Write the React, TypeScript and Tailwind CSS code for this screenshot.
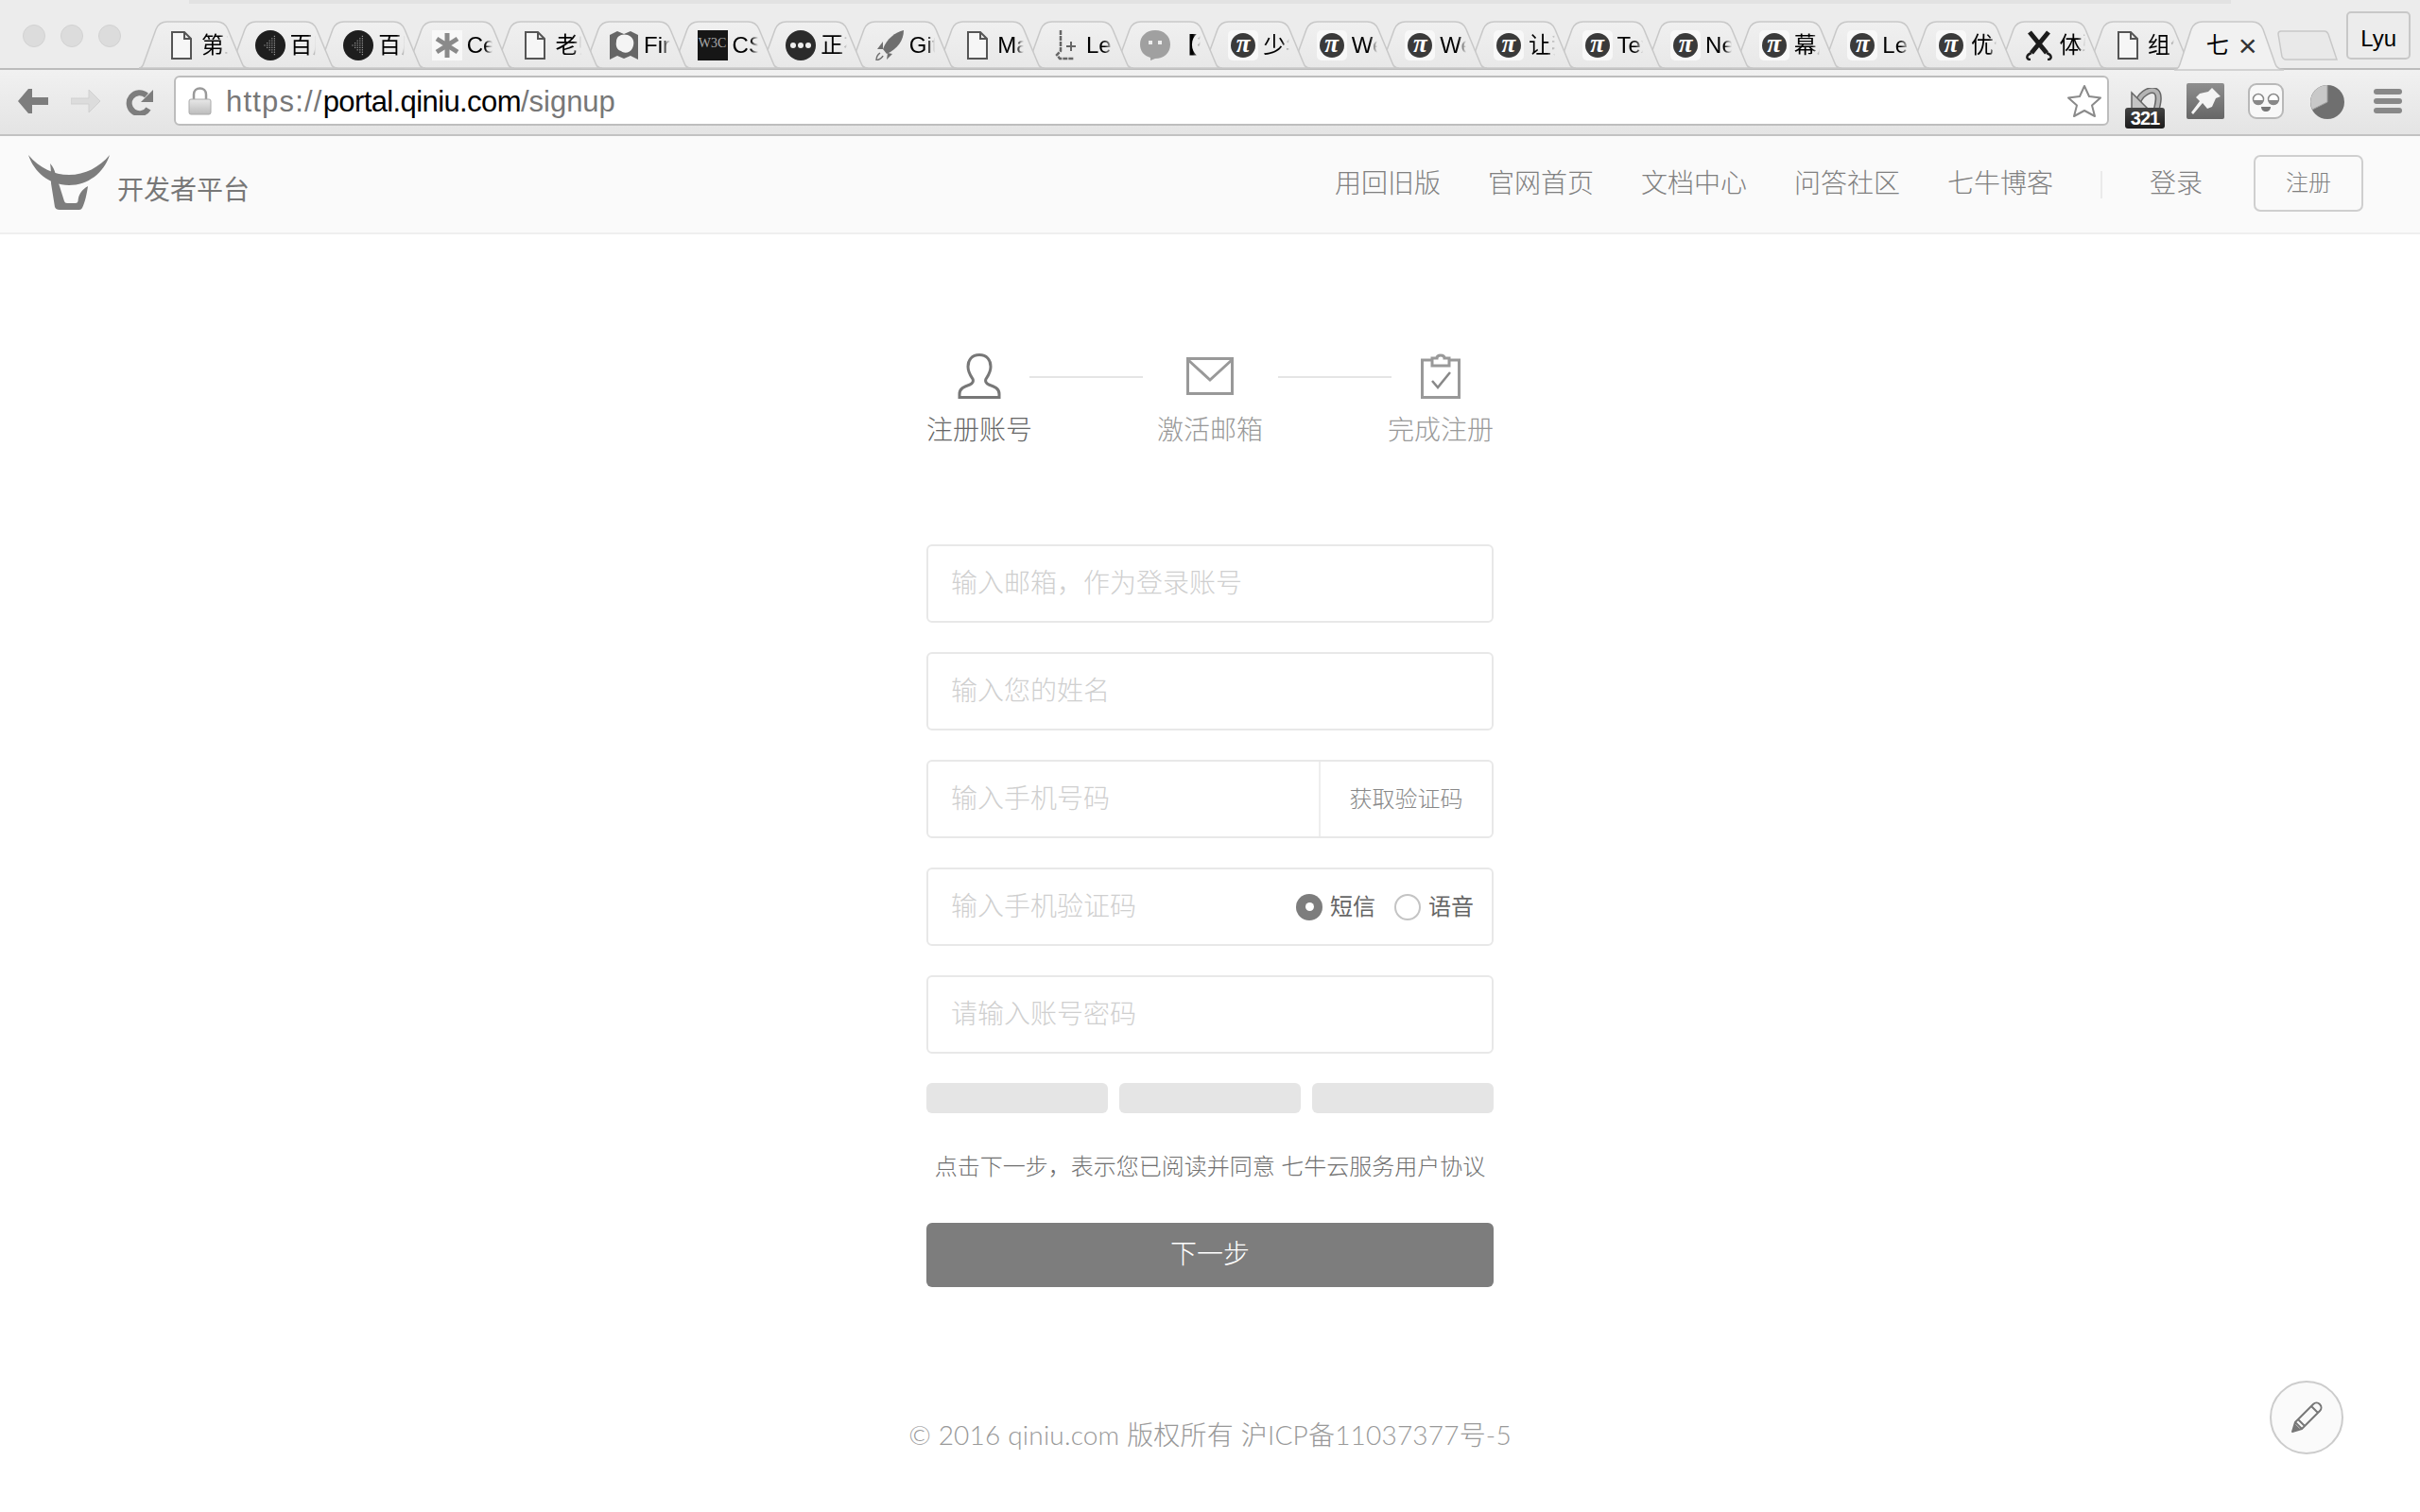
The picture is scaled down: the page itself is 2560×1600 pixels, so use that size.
import React from 'react';

const cjk = "font-['Liberation_Sans','Noto_Sans_CJK_SC',sans-serif]";

type Fav = 'doc' | 'baidu' | 'star' | 'map' | 'w3c' | 'dots' | 'rocket' | 'learn' | 'chat' | 'pi' | 'cross';

const tabs: { icon: Fav; title: string }[] = [
    { icon: 'doc', title: '第三' },
    { icon: 'baidu', title: '百度' },
    { icon: 'baidu', title: '百度' },
    { icon: 'star', title: 'Cen' },
    { icon: 'doc', title: '老师' },
    { icon: 'map', title: 'Fire' },
    { icon: 'w3c', title: 'CSS' },
    { icon: 'dots', title: '正在' },
    { icon: 'rocket', title: 'Git' },
    { icon: 'doc', title: 'Mac' },
    { icon: 'learn', title: 'Lea' },
    { icon: 'chat', title: '【微' },
    { icon: 'pi', title: '少年' },
    { icon: 'pi', title: 'Web' },
    { icon: 'pi', title: 'Web' },
    { icon: 'pi', title: '让我' },
    { icon: 'pi', title: 'Tex' },
    { icon: 'pi', title: 'New' },
    { icon: 'pi', title: '幕后' },
    { icon: 'pi', title: 'Lea' },
    { icon: 'pi', title: '优化' },
    { icon: 'cross', title: '体验' },
    { icon: 'doc', title: '组件' },
];

const baiduDots = [0, 1, 2, 3, 4].flatMap((c) =>
    Array.from({ length: c * 2 + 1 }, (_, r) => ({ x: 10 + c * 2.6, y: 16 + (r - c) * 2.4 })),
);

const Favicon = ({ icon }: { icon: Fav }) => {
    if (icon === 'pi')
        return (
            <span className="w-[32px] h-[32px] shrink-0 rounded-[5px] bg-[#f8f8f8] flex items-center justify-center">
                <span className="w-[26px] h-[26px] rounded-full bg-[#3a3a3a] text-white text-[27px] leading-[22px] text-center italic font-['Liberation_Serif',serif] font-bold">π</span>
            </span>
        );
    if (icon === 'w3c')
        return (
            <span className="w-[32px] h-[32px] shrink-0 bg-[#161616] text-[#a8a8a8] text-[14px] leading-[28px] text-center font-['Liberation_Serif',serif]">W3C</span>
        );
    return (
        <svg width="32" height="32" viewBox="0 0 32 32" className="shrink-0">
            {icon === 'doc' && <path d="M6 2H19L26 9V30H6Z M19 2V9H26" fill="#f6f6f6" stroke="#555" strokeWidth="2" />}
            {icon === 'baidu' && (
                <g>
                    <circle cx="16" cy="16" r="16" fill="#1e1e1e" />
                    {baiduDots.map((d, i) => (
                        <rect key={i} x={d.x - 0.6} y={d.y - 0.6} width="1.2" height="1.2" fill="#999" />
                    ))}
                </g>
            )}
            {icon === 'star' && (
                <g>
                    <rect width="32" height="32" fill="#f8f8f8" />
                    <path d="M16 3V29M5 9L27 23M27 9L5 23" stroke="#8a8a8a" strokeWidth="5" />
                </g>
            )}
            {icon === 'map' && (
                <g>
                    <path d="M1 5L9 1L16 4L23 1L31 5V31L23 27L16 30L9 27L1 31Z" fill="#666" />
                    <path d="M8 12C8 6 14 3 20 5C26 7 28 13 25 19C23 24 16 25 13 22C9 21 7 17 8 12Z" fill="#f4f4f4" />
                </g>
            )}
            {icon === 'dots' && (
                <g>
                    <circle cx="16" cy="16" r="16" fill="#2b2b2b" />
                    <circle cx="8" cy="16" r="3" fill="#eee" />
                    <circle cx="16" cy="16" r="3" fill="#eee" />
                    <circle cx="24" cy="16" r="3" fill="#eee" />
                </g>
            )}
            {icon === 'rocket' && (
                <g fill="#6e6e6e">
                    <path d="M31 0C22 2 13 9 9 20L13 25C24 20 31 11 31 0Z" />
                    <path d="M9 12L3 20L9 20ZM14 24L13 31L19 25Z" />
                    <path d="M6 24C3 26 2 29 2 32C5 31 8 30 9 27" fill="none" stroke="#6e6e6e" strokeWidth="1.500" />
                </g>
            )}
            {icon === 'learn' && (
                <g fill="none" stroke="#666" strokeWidth="2.5">
                    <path d="M10 0V22L6 26L9 30H24" strokeDasharray="5 1" />
                    <path d="M21 12V22M16 17H26" strokeWidth="2" />
                </g>
            )}
            {icon === 'chat' && (
                <g>
                    <path d="M16 0C25 0 32 6 32 15C32 24 25 30 16 30L11 32V29C4 27 0 22 0 15C0 6 7 0 16 0Z" fill="#a0a0a0" />
                    <rect x="9" y="11" width="4" height="4" fill="#eee" />
                    <rect x="19" y="11" width="4" height="4" fill="#eee" />
                </g>
            )}
            {icon === 'cross' && (
                <g fill="none" stroke="#1c1c1c">
                    <path d="M6 2L24 24M26 2L8 24" strokeWidth="5" />
                    <path d="M8 24C2 26 2 31 7 31M24 24C30 26 30 31 25 31" strokeWidth="2.5" />
                </g>
            )}
        </svg>
    );
};

const TabShape = ({ active }: { active?: boolean }) => (
    <svg width="118" height="51" viewBox="0 0 118 51" className="absolute left-0 top-0 overflow-visible">
        <defs>
            <linearGradient id="tabfill" x1="0" y1="0" x2="0" y2="1">
                <stop offset="0" stopColor="#f0f0f0" />
                <stop offset="1" stopColor="#e8e8e8" />
            </linearGradient>
        </defs>
        <path
            d={active ? 'M0 51C4 50 5 48 6 45L18 8C20 3 24 0 30 0H82C89 0 92 3 94 8L107 45C108 48 110 50 116 51Z' : 'M0 49C2 49 4 47 5 44L18 8C20 3 24 0 30 0H82C89 0 92 3 94 8L109 44C110 47 112 49 116 49Z'}
            fill={active ? '#f1f1f1' : 'url(#tabfill)'}
            stroke="#c8c8c8"
            strokeWidth="1.5"
        />
    </svg>
);

const Tab = ({ icon, title, z }: { icon: Fav; title: string; z: number }) => (
    <div className="relative w-[93.6px] h-[49px] mt-[23px] shrink-0" style={{ zIndex: z }}>
        <TabShape />
        <div className="relative h-full pl-[29px] flex items-center gap-[5px]">
            <Favicon icon={icon} />
            <span className="w-[28px] overflow-hidden whitespace-nowrap text-[24px] text-black [mask-image:linear-gradient(to_right,#000_70%,transparent)]">{title}</span>
        </div>
    </div>
);

const Field = ({ placeholder, children }: { placeholder: string; children?: React.ReactNode }) => (
    <div className="h-[83px] mb-[31px] flex items-center border-2 border-[#e8e8e8] rounded-[6px] bg-white">
        <input placeholder={placeholder} className="flex-1 min-w-0 h-full pl-[24px] text-[28px] font-light outline-none bg-transparent placeholder:text-[#cfcfcf]" />
        {children}
    </div>
);

const Radio = ({ label, checked }: { label: string; checked?: boolean }) => (
    <label className="flex items-center gap-[8px] text-[24px] text-[#666]">
        {checked ? (
            <span className="w-[28px] h-[28px] rounded-full bg-[#7d7d7d] flex items-center justify-center">
                <span className="w-[9px] h-[9px] rounded-full bg-white" />
            </span>
        ) : (
            <span className="w-[28px] h-[28px] rounded-full border-2 border-[#c4c4c4] bg-white" />
        )}
        {label}
    </label>
);

const Step = ({ label, dark, children }: { label: string; dark?: boolean; children: React.ReactNode }) => (
    <div className="w-[112px] flex flex-col items-center shrink-0">
        <div className="h-[48px] flex items-center justify-center">{children}</div>
        <span className={`mt-[14px] text-[28px] leading-[40px] font-light ${dark ? 'text-[#666]' : 'text-[#999]'}`}>{label}</span>
    </div>
);

export default function App() {
    return (
        <div className={`relative w-[2560px] h-[1600px] overflow-hidden bg-white ${cjk}`}>
            {/* browser tab strip */}
            <div className="relative h-[74px] flex items-start border-b-2 border-[#bcbcbc] bg-[#ececec]">
                <div className="absolute left-[200px] right-[200px] top-0 h-[4px] bg-[#e2e2e2]" />
                <div className="w-[147px] shrink-0 pl-[24px] pt-[26px] flex gap-[16px]">
                    <span className="w-[24px] h-[24px] rounded-full bg-[#dcdcdc] border border-[#d2d2d2]" />
                    <span className="w-[24px] h-[24px] rounded-full bg-[#dcdcdc] border border-[#d2d2d2]" />
                    <span className="w-[24px] h-[24px] rounded-full bg-[#dcdcdc] border border-[#d2d2d2]" />
                </div>
                {tabs.map((t, i) => (
                    <Tab key={i} icon={t.icon} title={t.title} z={40 - i} />
                ))}
                <div className="relative w-[93.6px] h-[49px] mt-[23px] shrink-0 z-50">
                    <TabShape active />
                    <div className="relative h-full pl-[34px] flex items-center gap-[10px] text-[24px] text-black">
                        <span>七</span>
                        <span className="text-[34px] leading-none text-[#333]">×</span>
                    </div>
                </div>
                <svg width="64" height="32" viewBox="0 0 64 32" className="mt-[32px] ml-[16px] shrink-0">
                    <path d="M1 4C1 2 2 1 4 1H50C52 1 53 2 54 4L63 31H9C7 31 6 30 5 28Z" fill="#e9e9e9" stroke="#c8c8c8" strokeWidth="1.5" />
                </svg>
                <div className="mt-[12px] ml-[9px] w-[68px] h-[51px] rounded-[5px] border-2 border-[#c8c8c8] text-[24px] leading-[54px] text-center text-black">Lyu</div>
            </div>

            {/* browser toolbar */}
            <div className="h-[70px] flex items-start pl-[19px] border-b-2 border-[#c2c2c2] bg-gradient-to-b from-[#f1f1f1] to-[#e4e4e4]">
                <svg width="32" height="28" viewBox="0 0 32 28" className="mt-[19px] shrink-0">
                    <path d="M32 10H15V1H11L0 14L11 27H15V18H32Z" fill="#7d7d7d" />
                </svg>
                <svg width="32" height="28" viewBox="0 0 32 28" className="mt-[19px] ml-[24px] shrink-0">
                    <path d="M0 11H19V2L31 14L19 26V17H0Z" fill="#dcdcdc" stroke="#d0d0d0" />
                </svg>
                <svg width="30" height="28" viewBox="0 0 30 28" className="mt-[20px] ml-[26px] shrink-0">
                    <path d="M24 21A11 11 0 1 1 22 7" fill="none" stroke="#7d7d7d" strokeWidth="6" />
                    <path d="M29 1V14H16Z" fill="#7d7d7d" />
                </svg>
                <div className="mt-[6px] ml-[21px] w-[2047px] h-[53px] shrink-0 flex items-center rounded-[6px] border-2 border-[#bdbdbd] bg-white">
                    <svg width="25" height="30" viewBox="0 0 25 30" className="ml-[13px] shrink-0">
                        <defs>
                            <linearGradient id="lock" x1="0" y1="0" x2="0" y2="1">
                                <stop offset="0" stopColor="#e8e8e8" />
                                <stop offset="1" stopColor="#bcbcbc" />
                            </linearGradient>
                        </defs>
                        <path d="M6 14V8C6 4 9 1.500 12.500 1.500S19 4 19 8V14" fill="none" stroke="#999" strokeWidth="2.5" />
                        <rect x="1" y="13" width="23" height="16" rx="2" fill="url(#lock)" stroke="#aaa" />
                    </svg>
                    <span className="ml-[15px] mt-[3px] text-[31px] text-[#777]">
                        <span className="tracking-[1.2px]">https://</span>
                        <span className="text-black tracking-[-0.6px]">portal.qiniu.com</span>/signup
                    </span>
                    <svg width="38" height="36" viewBox="0 0 38 36" className="ml-auto mr-[5px] shrink-0">
                        <path d="M19 2L24 13L36 14.500L27 22.500L30 34L19 28L8 34L11 22.500L2 14.500L14 13Z" fill="#fff" stroke="#8a8a8a" strokeWidth="2" strokeLinejoin="round" />
                    </svg>
                </div>
                <div className="relative mt-[19px] ml-[17px] w-[42px] h-[43px] shrink-0">
                    <svg width="42" height="26" viewBox="0 0 42 26" className="absolute left-0 top-0">
                        <path d="M14 14C18 5 28 0 33 4C37 8 35 16 33 24" fill="none" stroke="#666" strokeWidth="7" />
                        <path d="M14 14C18 5 28 0 33 4C37 8 35 16 33 24" fill="none" stroke="#b4b4b4" strokeWidth="4" />
                        <path d="M7 5V24H26Z" fill="#c4c4c4" stroke="#666" strokeWidth="1.500" />
                    </svg>
                    <span className="absolute left-0 bottom-0 w-[42px] h-[22px] rounded-[3px] bg-gradient-to-b from-[#444] to-[#1c1c1c] text-white text-[20px] leading-[22px] text-center font-bold tracking-[-1px]">321</span>
                </div>
                <svg width="40" height="38" viewBox="0 0 40 38" className="mt-[14px] ml-[23px] shrink-0">
                    <defs>
                        <linearGradient id="pin" x1="0" y1="0" x2="0" y2="1">
                            <stop offset="0" stopColor="#8e8e8e" />
                            <stop offset="1" stopColor="#666" />
                        </linearGradient>
                    </defs>
                    <rect width="40" height="38" rx="2" fill="url(#pin)" />
                    <path d="M27 5L36 14L31 16L27 25L22 27L17 21L7 33L5 31L14 19L10 15L14 11L23 9Z" fill="#f4f4f4" />
                </svg>
                <svg width="38" height="38" viewBox="0 0 38 38" className="mt-[14px] ml-[25px] shrink-0">
                    <rect x="1" y="1" width="36" height="36" rx="8" fill="#f8f8f8" stroke="#b8b8b8" strokeWidth="2" />
                    <circle cx="11" cy="17" r="5.500" fill="#fff" stroke="#888" strokeWidth="1.500" />
                    <circle cx="27" cy="17" r="5.500" fill="#fff" stroke="#888" strokeWidth="1.500" />
                    <path d="M6 18A5 5 0 0 0 16 18Z" fill="#888" />
                    <path d="M22 18A5 5 0 0 0 32 18Z" fill="#888" />
                    <path d="M14 25H24C24 28 22 30 19 30C16 30 14 28 14 25Z" fill="#777" />
                </svg>
                <svg width="36" height="38" viewBox="0 0 36 38" className="mt-[15px] ml-[28px] shrink-0">
                    <circle cx="18" cy="19" r="18" fill="#6f6f6f" />
                    <path d="M18 19V1A18 18 0 0 0 2 27Z" fill="#c8c8c8" />
                    <path d="M18 1V19L2 27" fill="none" stroke="#a0a0a0" strokeWidth="1" />
                </svg>
                <div className="mt-[20px] ml-[31px] w-[30px] flex flex-col gap-[4px] shrink-0">
                    <span className="h-[6px] rounded-[3px] bg-[#888]" />
                    <span className="h-[6px] rounded-[3px] bg-[#888]" />
                    <span className="h-[6px] rounded-[3px] bg-[#888]" />
                </div>
            </div>

            {/* site header */}
            <header className="h-[104px] flex items-center pl-[30px] pr-[60px] border-b-2 border-[#efefef] bg-[#fafafa]">
                <svg width="86" height="58" viewBox="0 0 86 58" className="shrink-0 -mt-[4px]">
                    <path d="M0 0C12 14 27 21 43 21C60 21 75 13 86 0C80 19 63 32 43 32C22 32 6 18 0 0Z" fill="#7d7d7d" />
                    <path d="M23 9C26 12 28 16 29 22L33 33L38 49Q38.500 51 41 51H50Q52 51 52.500 49C53 42 56 37 63 33C62 40 60 50 57 56Q56 58 54 58H33Q29 58 28 55L24 30C24 22 24 14 23 9Z" fill="#7d7d7d" />
                </svg>
                <span className="ml-[8px] mt-[13px] text-[28px] text-[#777]">开发者平台</span>
                <nav className="ml-auto flex items-center text-[28px] text-[#808080] font-light">
                    <a className="mr-[50px]">用回旧版</a>
                    <a className="mr-[50px]">官网首页</a>
                    <a className="mr-[50px]">文档中心</a>
                    <a className="mr-[50px]">问答社区</a>
                    <a className="mr-[50px]">七牛博客</a>
                    <span className="w-[2px] h-[29px] mr-[50px] bg-[#eaeaea]" />
                    <a>登录</a>
                    <a className="ml-[54px] -mt-[2px] w-[116px] h-[60px] flex items-center justify-center rounded-[7px] border-2 border-[#cfcfcf] text-[24px]">注册</a>
                </nav>
            </header>

            {/* signup form */}
            <main className="w-[600px] mx-auto pt-[126px]">
                <div className="flex items-start">
                    <Step label="注册账号" dark>
                        <svg width="46" height="48" viewBox="0 0 46 48">
                            <path d="M23 1.500C15 1.500 11 7 11 14C11 20 14 24 16 27C17 29 16 32 13 33C7 35 2 37 2 43V46.500H44V43C44 37 39 35 33 33C30 32 29 29 30 27C32 24 35 20 35 14C35 7 31 1.500 23 1.500Z" fill="none" stroke="#777" strokeWidth="3" />
                        </svg>
                    </Step>
                    <div className="w-[120px] h-[2px] -ml-[3px] mt-[24px] bg-[#e5e5e5] shrink-0" />
                    <div className="ml-[15px] shrink-0">
                        <Step label="激活邮箱">
                            <svg width="50" height="40" viewBox="0 0 50 40">
                                <rect x="1.500" y="1.500" width="47" height="37" fill="none" stroke="#999" strokeWidth="3" />
                                <path d="M2 3L25 24L48 3" fill="none" stroke="#999" strokeWidth="3" />
                            </svg>
                        </Step>
                    </div>
                    <div className="w-[120px] h-[2px] ml-[16px] mt-[24px] bg-[#e5e5e5] shrink-0" />
                    <div className="-ml-[4px] shrink-0">
                        <Step label="完成注册">
                            <svg width="42" height="48" viewBox="0 0 42 48">
                                <path d="M12 7H1.500V46.500H40.500V7H30" fill="none" stroke="#999" strokeWidth="3" />
                                <path d="M12 5H17C17 1 25 1 25 5H30V13H12Z" fill="none" stroke="#999" strokeWidth="3" />
                                <path d="M12 29L18 36L31 20" fill="none" stroke="#888" strokeWidth="2.500" />
                            </svg>
                        </Step>
                    </div>
                </div>

                <div className="mt-[100px]">
                    <Field placeholder={'输入邮箱\uFF0C作为登录账号'} />
                    <Field placeholder="输入您的姓名" />
                    <Field placeholder="输入手机号码">
                        <button className="w-[183px] h-full border-l-2 border-[#eee] text-[24px] font-light text-[#888]">获取验证码</button>
                    </Field>
                    <Field placeholder="输入手机验证码">
                        <div className="flex items-center gap-[20px] pr-[19px]">
                            <Radio label="短信" checked />
                            <Radio label="语音" />
                        </div>
                    </Field>
                    <Field placeholder="请输入账号密码" />
                </div>

                <div className="grid grid-cols-3 gap-[12px]">
                    <div className="h-[32px] rounded-[6px] bg-[#e5e5e5]" />
                    <div className="h-[32px] rounded-[6px] bg-[#e5e5e5]" />
                    <div className="h-[32px] rounded-[6px] bg-[#e5e5e5]" />
                </div>

                <p className="mt-[37px] text-center text-[24px] leading-[40px] text-[#707070] font-light whitespace-nowrap">{'点击下一步\uFF0C表示您已阅读并同意 七牛云服务用户协议'}</p>

                <button className="mt-[39px] w-full h-[68px] rounded-[6px] bg-[#7d7d7d] text-white text-[28px] font-light">下一步</button>
            </main>

            <footer className="mt-[136px] text-center text-[28px] leading-[40px] tracking-[0.2px] text-[#999] font-light font-['Lato','Noto_Sans_CJK_SC',sans-serif]">© 2016 qiniu.com 版权所有 沪ICP备11037377号-5</footer>

            {/* feedback button */}
            <div className="absolute left-[2401px] top-[1461px] w-[78px] h-[78px] flex items-center justify-center rounded-full border-2 border-[#cccccc] bg-[#fafafa]">
                <svg width="34" height="34" viewBox="0 0 34 34">
                    <path d="M2 32L5 22L24 3C26 1 29 1 31 3C33 5 33 8 31 10L12 29Z M5 22L12 29 M8 19L15 26 M22 5L29 12" fill="none" stroke="#777" strokeWidth="2" strokeLinejoin="round" />
                    <path d="M2 32L5 24L10 29Z" fill="#777" />
                </svg>
            </div>
        </div>
    );
}
